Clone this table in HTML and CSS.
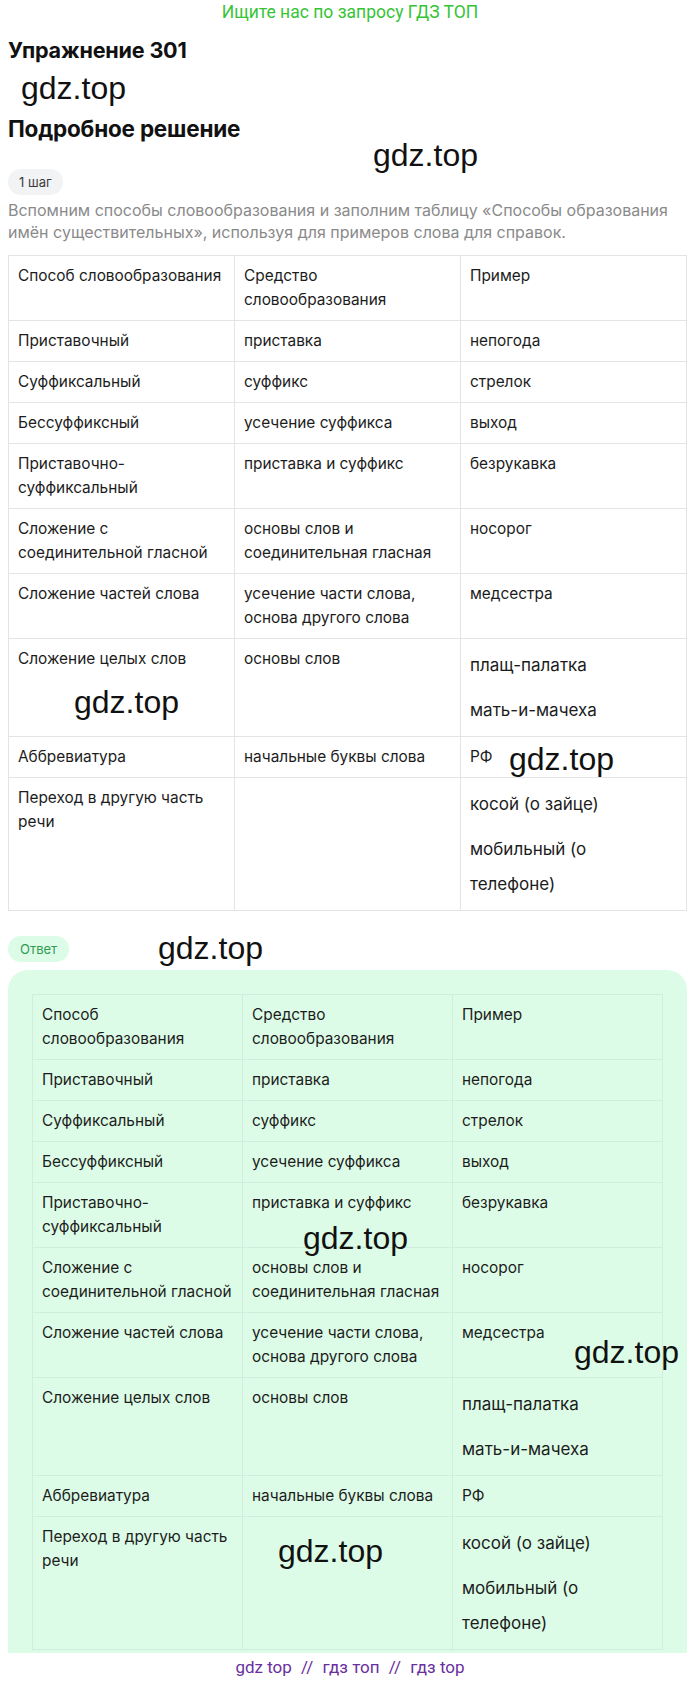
FILE: index.html
```html
<!DOCTYPE html>
<html lang="ru">
<head>
<meta charset="utf-8">
<title>Упражнение 301</title>
<link rel="stylesheet" href="styles.css">
</head>
<body>
<div class="page">
  <div class="promo">Ищите нас по запросу ГДЗ ТОП</div>
  <main class="content">
    <h1 class="title">Упражнение 301</h1>
    <h2 class="subtitle">Подробное решение</h2>
    <span class="tag tag-step">1 шаг</span>
    <p class="lead">Вспомним способы словообразования и заполним таблицу «Способы образования имён существительных», используя для примеров слова для справок.</p>
    <table class="grid">
      <tr><td>Способ словообразования</td><td>Средство словообразования</td><td>Пример</td></tr>
      <tr><td>Приставочный</td><td>приставка</td><td>непогода</td></tr>
      <tr><td>Суффиксальный</td><td>суффикс</td><td>стрелок</td></tr>
      <tr><td>Бессуффиксный</td><td>усечение суффикса</td><td>выход</td></tr>
      <tr><td>Приставочно-суффиксальный</td><td>приставка и суффикс</td><td>безрукавка</td></tr>
      <tr><td>Сложение с соединительной гласной</td><td>основы слов и соединительная гласная</td><td>носорог</td></tr>
      <tr><td>Сложение частей слова</td><td>усечение части слова, основа другого слова</td><td>медсестра</td></tr>
      <tr><td>Сложение целых слов</td><td>основы слов</td><td class="ex"><p>плащ-палатка</p><p>мать-и-мачеха</p></td></tr>
      <tr><td>Аббревиатура</td><td>начальные буквы слова</td><td>РФ</td></tr>
      <tr><td>Переход в другую часть речи</td><td></td><td class="ex"><p>косой (о зайце)</p><p>мобильный (о<br>телефоне)</p></td></tr>
    </table>
    <span class="tag tag-answer">Ответ</span>
    <div class="answer">
      <table class="grid grid-answer">
        <tr><td>Способ словообразования</td><td>Средство словообразования</td><td>Пример</td></tr>
        <tr><td>Приставочный</td><td>приставка</td><td>непогода</td></tr>
        <tr><td>Суффиксальный</td><td>суффикс</td><td>стрелок</td></tr>
        <tr><td>Бессуффиксный</td><td>усечение суффикса</td><td>выход</td></tr>
        <tr><td>Приставочно-суффиксальный</td><td>приставка и суффикс</td><td>безрукавка</td></tr>
        <tr><td>Сложение с соединительной гласной</td><td>основы слов и соединительная гласная</td><td>носорог</td></tr>
        <tr><td>Сложение частей слова</td><td>усечение части слова, основа другого слова</td><td>медсестра</td></tr>
        <tr><td>Сложение целых слов</td><td>основы слов</td><td class="ex"><p>плащ-палатка</p><p>мать-и-мачеха</p></td></tr>
        <tr><td>Аббревиатура</td><td>начальные буквы слова</td><td>РФ</td></tr>
        <tr><td>Переход в другую часть речи</td><td></td><td class="ex"><p>косой (о зайце)</p><p>мобильный (о<br>телефоне)</p></td></tr>
      </table>
    </div>
  </main>
  <footer class="foot">gdz top <span class="sep">//</span> гдз топ <span class="sep">//</span> гдз top</footer>

  <span class="wm wm1">gdz.top</span>
  <span class="wm wm2">gdz.top</span>
  <span class="wm wm3">gdz.top</span>
  <span class="wm wm4">gdz.top</span>
  <span class="wm wm5">gdz.top</span>
  <span class="wm wm6">gdz.top</span>
  <span class="wm wm7">gdz.top</span>
  <span class="wm wm8">gdz.top</span>
</div>
</body>
</html>
```

FILE: styles.css
```css
* { box-sizing: border-box; }

html, body {
  margin: 0;
  padding: 0;
  background: #ffffff;
}

body {
  font-family: Inter, "Noto Sans", sans-serif;
  color: #1c1c1c;
}

.page {
  position: relative;
  width: 700px;
  height: 1681px;
  overflow: hidden;
}

.promo {
  height: 24px;
  line-height: 24px;
  text-align: center;
  font-family: Roboto, "Liberation Sans", sans-serif;
  font-size: 17.5px;
  color: #36c436;
}

.content {
  padding: 0 13px 0 8px;
  display: flex;
  flex-direction: column;
  align-items: flex-start;
}

.title {
  margin: 12px 0 0;
  font-size: 21.6px;
  line-height: 28px;
  font-weight: 700;
  color: #111111;
  letter-spacing: -0.2px;
}

.subtitle {
  margin: 51px 0 0;
  font-size: 22.5px;
  line-height: 28px;
  font-weight: 700;
  color: #111111;
  letter-spacing: -0.2px;
}

.tag {
  display: inline-flex;
  align-items: center;
  height: 26px;
  padding: 0 11px;
  border-radius: 13px;
  font-size: 13px;
}

.tag-step {
  margin-top: 26px;
  background: #f2f3f5;
  color: #3d3d3d;
}

.lead {
  margin: 4px 0 0;
  font-size: 16px;
  line-height: 22px;
  color: #8a8a8a;
}

.grid {
  width: 100%;
  margin-top: 12px;
  border-collapse: collapse;
  table-layout: fixed;
  font-size: 15.4px;
  line-height: 24px;
  color: #1c1c1c;
}

.grid td {
  border: 1px solid #e4e4e4;
  padding: 8px 6px 8px 9px;
  vertical-align: top;
}

.grid .ex {
  padding-top: 9px;
}

.grid .ex p {
  margin: 0;
  font-size: 17px;
  line-height: 35px;
}

.grid .ex p + p {
  margin-top: 10px;
}

.tag-answer {
  margin-top: 25px;
  background: #dcfce7;
  color: #2f9a50;
  padding: 0 12px;
}

.answer {
  width: 100%;
  margin-top: 8px;
  padding: 24px 24px 3px;
  background: #dcfce7;
  border-radius: 20px 20px 0 0;
}

.grid-answer {
  margin-top: 0;
}

.grid-answer td {
  border-color: #d0eedb;
}

.foot {
  position: absolute;
  left: 0;
  right: 0;
  bottom: 0;
  height: 27px;
  line-height: 27px;
  background: #ffffff;
  text-align: center;
  font-family: Roboto, "Liberation Sans", sans-serif;
  font-size: 17px;
  color: #6a2f9e;
}

.foot .sep {
  margin: 0 5px;
}

.wm {
  position: absolute;
  font-family: "Liberation Sans", Arial, sans-serif;
  font-size: 32px;
  line-height: 32px;
  color: #111111;
  white-space: nowrap;
}

.wm1 { left: 21px; top: 72px; }
.wm2 { left: 373px; top: 139px; }
.wm3 { left: 74px; top: 686px; }
.wm4 { left: 509px; top: 743px; }
.wm5 { left: 158px; top: 932px; }
.wm6 { left: 303px; top: 1222px; }
.wm7 { left: 574px; top: 1336px; }
.wm8 { left: 278px; top: 1535px; }
```
